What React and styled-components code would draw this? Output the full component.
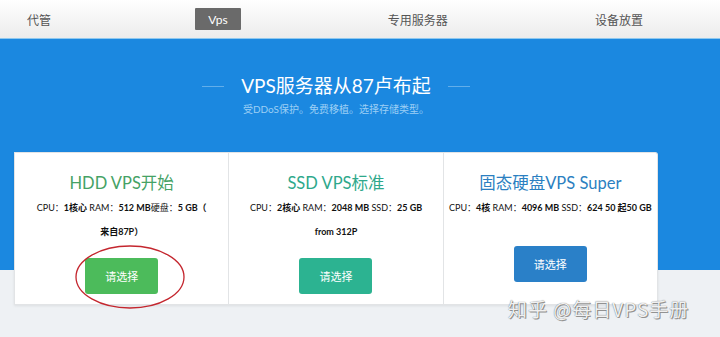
import React from "react";
import styled, { createGlobalStyle } from "styled-components";

const GlobalStyle = createGlobalStyle`
  body {
    margin: 0;
    background: #eef1f4;
    font-family: Lato, "Noto Sans CJK SC", sans-serif;
  }
`;

const Page = styled.div`
  position: relative;
  width: 720px;
  height: 337px;
  overflow: hidden;
  background: #eef1f4;
`;

const NavBar = styled.nav`
  height: 38px;
  display: flex;
  align-items: center;
  justify-content: space-between;
  padding: 0 77px 0 27px;
  background: linear-gradient(#ffffff, #ececec);
  border-bottom: 1px solid #8ec8ef;
`;

const NavItem = styled.a`
  display: flex;
  align-items: center;
  height: 22px;
  font-size: 12px;
  color: ${(p) => (p.$active ? "#fff" : "#555")};
  background: ${(p) => (p.$active ? "#6a6a6a" : "transparent")};
  padding: ${(p) => (p.$active ? "0 13px" : "0")};
  margin-left: ${(p) => (p.$active ? "-3px" : "0")};
  border-radius: 1px;
  text-decoration: none;
`;

const Hero = styled.section`
  background: #1b88e0;
  padding: 35px 0 154px;
`;

const Container = styled.div`
  width: 644px;
  margin-left: 14px;
`;

const HeadingRow = styled.div`
  display: flex;
  align-items: center;
  justify-content: center;
  gap: 17px;
`;

const Rule = styled.span`
  width: 22px;
  height: 1px;
  background: #62aeea;
`;

const Heading = styled.h1`
  margin: 0;
  font-size: 19px;
  line-height: 24px;
  font-weight: 400;
  color: #fff;
`;

const Sub = styled.p`
  margin: 4px 0 0;
  text-align: center;
  font-size: 10px;
  line-height: 14px;
  color: #9ccff5;
`;

const CardRow = styled(Container)`
  display: flex;
  margin-top: -118px;
  box-shadow: 0 1px 3px rgba(0, 0, 0, 0.08);
  border-radius: 0 3px 0 0;
`;

const Card = styled.div`
  position: relative;
  flex: 1;
  height: 153px;
  box-sizing: border-box;
  padding: 18px 5px 0;
  background: #fff;
  border: 1px solid #e2e4e6;
  border-left-width: ${(p) => (p.$first ? "1px" : "0")};
  border-radius: ${(p) => (p.$last ? "0 3px 0 0" : "0")};
  display: flex;
  flex-direction: column;
  align-items: center;
  text-align: center;
`;

const Title = styled.h2`
  margin: 0;
  font-size: 16.5px;
  line-height: 25px;
  font-weight: 400;
  color: ${(p) => p.$color};
`;

const Spec = styled.p`
  margin: 0;
  font-size: 9px;
  line-height: 24px;
  color: #111;
  white-space: nowrap;
  b {
    font-weight: 700;
  }
`;

const Price = styled.p`
  margin: 0;
  min-height: 12px;
  font-size: 9px;
  line-height: 24px;
  font-weight: 700;
  color: #111;
`;

const Choose = styled.button`
  margin-top: 14px;
  width: 73px;
  height: 36px;
  border: none;
  border-radius: 3px;
  background: ${(p) => p.$bg};
  color: #fff;
  font-family: inherit;
  font-size: 11px;
`;

const Ellipse = styled.svg`
  position: absolute;
  left: 60px;
  top: 93px;
  overflow: visible;
`;

const Watermark = styled.div`
  position: absolute;
  left: 508px;
  top: 295px;
  font-family: "Noto Sans CJK SC", sans-serif;
  font-size: 19px;
  letter-spacing: 1px;
  color: rgba(255, 255, 255, 0.92);
  text-shadow: 0 0 1px #555, 1px 1px 0 #9a9a9a;
`;

const plans = [
  {
    title: "HDD VPS开始",
    color: "#45a265",
    btn: "#4cbb5b",
    spec: (
      <>
        CPU：<b>1核心</b> RAM：<b>512 MB</b>硬盘：<b>5 GB（</b>
        <br />
        <b>来自87P）</b>
      </>
    ),
    price: null,
    circled: true,
  },
  {
    title: "SSD VPS标准",
    color: "#2ea88b",
    btn: "#2cb391",
    spec: (
      <>
        CPU：<b>2核心</b> RAM：<b>2048 MB</b> SSD：<b>25 GB</b>
      </>
    ),
    price: "from 312P",
  },
  {
    title: "固态硬盘VPS Super",
    color: "#2b7fc1",
    btn: "#2a80c8",
    spec: (
      <>
        CPU：<b>4核</b> RAM：<b>4096 MB</b> SSD：<b>624 50 起50 GB</b>
      </>
    ),
    price: "",
  },
];

export default function App() {
  return (
    <Page>
      <GlobalStyle />
      <NavBar>
        <NavItem>代管</NavItem>
        <NavItem $active>Vps</NavItem>
        <NavItem>专用服务器</NavItem>
        <NavItem>设备放置</NavItem>
      </NavBar>
      <Hero>
        <Container>
          <HeadingRow>
            <Rule />
            <Heading>VPS服务器从87卢布起</Heading>
            <Rule />
          </HeadingRow>
          <Sub>受DDoS保护。免费移植。选择存储类型。</Sub>
        </Container>
      </Hero>
      <CardRow>
        {plans.map((p, i) => (
          <Card key={i} $first={i === 0} $last={i === plans.length - 1}>
            <Title $color={p.color}>{p.title}</Title>
            <Spec>{p.spec}</Spec>
            {p.price !== null && <Price>{p.price}</Price>}
            <Choose $bg={p.btn}>请选择</Choose>
            {p.circled && (
              <Ellipse width="110" height="62">
                <ellipse cx="55" cy="31" rx="54" ry="31" fill="none" stroke="#c4262e" strokeWidth="1.3" />
              </Ellipse>
            )}
          </Card>
        ))}
      </CardRow>
      <Watermark>知乎 @每日VPS手册</Watermark>
    </Page>
  );
}
